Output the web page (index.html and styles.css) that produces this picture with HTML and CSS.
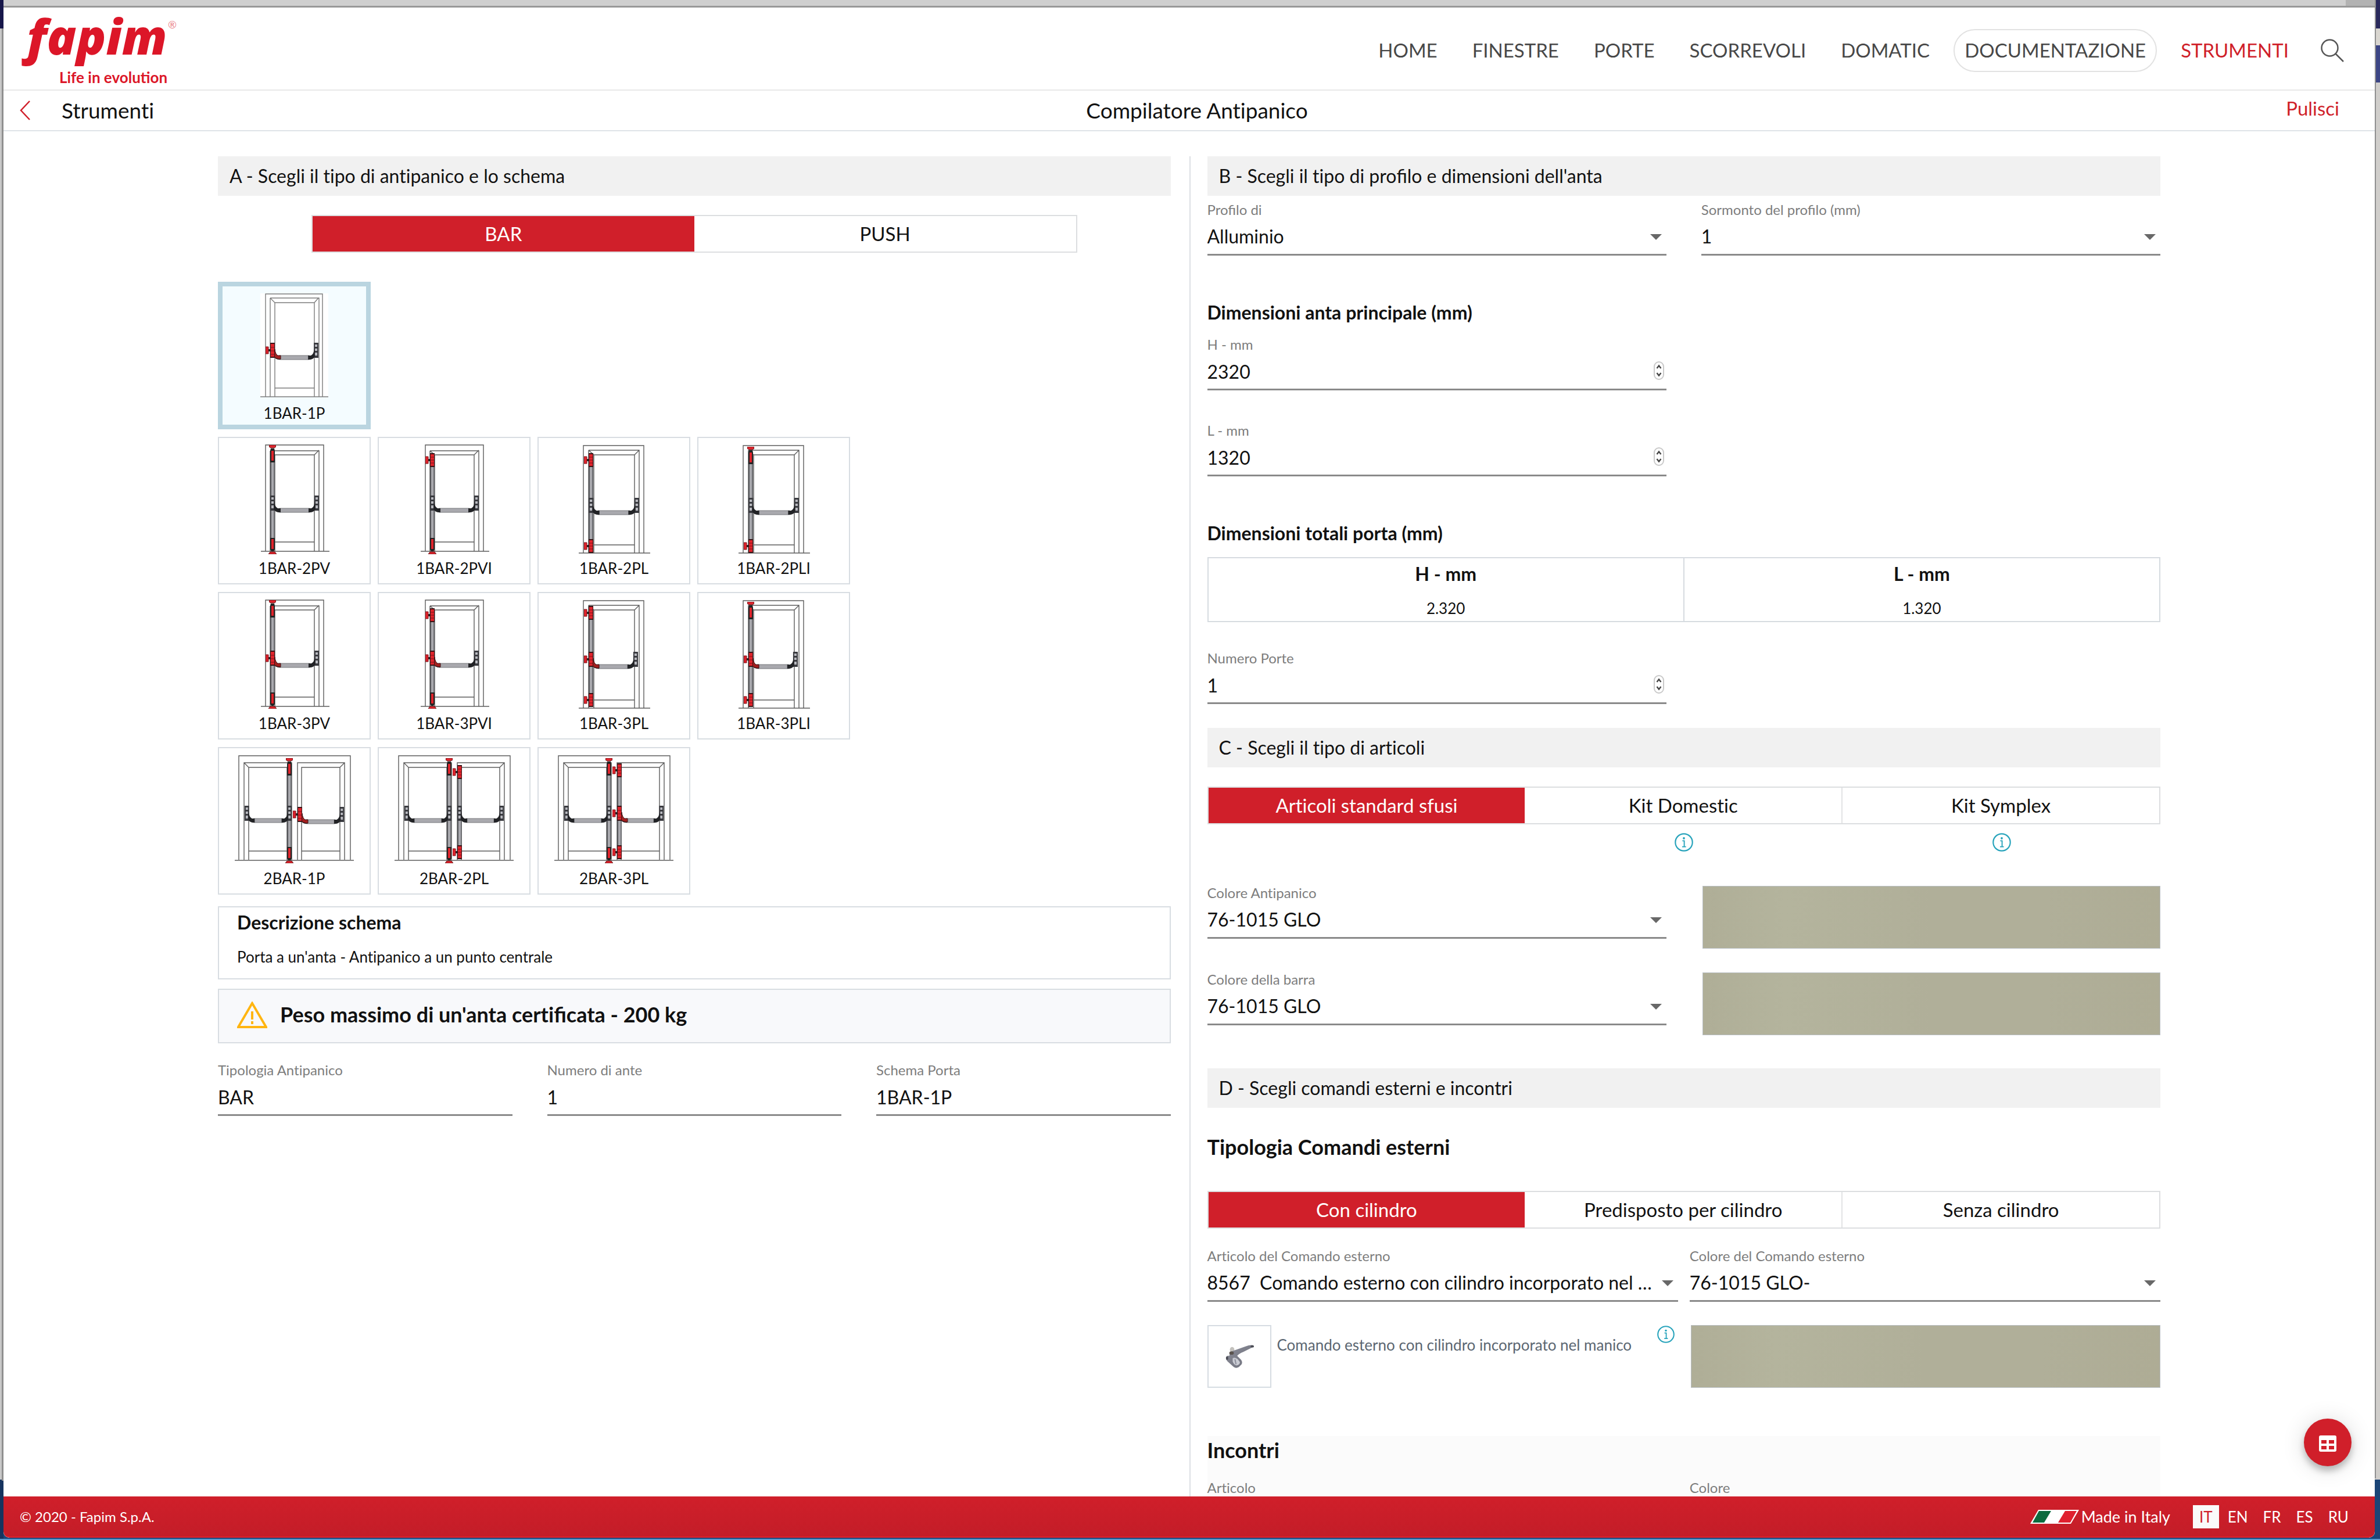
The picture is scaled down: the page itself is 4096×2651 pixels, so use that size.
FILE: index.html
```html
<!DOCTYPE html>
<html lang="it">
<head>
<meta charset="utf-8">
<title>Compilatore Antipanico - Fapim</title>
<link rel="stylesheet" href="styles.css">
</head>
<body>

<svg class="sprite" aria-hidden="true">
  <!-- single door frames -->
  <symbol id="door-v" viewBox="0 0 263 210">
    <g class="frame">
      <path d="M82 197V14H182V197M90 24H174V197M90 24V197M98 197V31H166V197M166 31L174 23M98 31L90 24M98 181H166M74 197H192"/>
    </g>
  </symbol>
  <symbol id="door-l" viewBox="0 0 263 210">
    <g class="frame">
      <path d="M79 200V15H183V200M88 23H175V200M88 23V200M97 200V31H167V200M167 31L175 23M97 31L88 23M97 186H167M71 200H194"/>
    </g>
  </symbol>
  <!-- double door frame -->
  <symbol id="door-2" viewBox="0 0 263 210">
    <g class="frame">
      <path d="M36 194V15H228V194M45 194V27H127V194M53 194V35H119V194M45 27L53 35M53 179H119M137 194V27H218V194M144 194V35H210V194M218 27L210 35M144 179H210M29 195H234"/>
    </g>
  </symbol>
  <symbol id="shaft" viewBox="0 0 8 10" preserveAspectRatio="none">
    <rect width="8" height="10" fill="#a9a9ae"/><rect width="2" height="10" fill="#55565a"/><rect x="6" width="2" height="10" fill="#6c6d71"/>
  </symbol>
  <!-- horizontal push bar with its two end brackets -->
  <symbol id="bar" viewBox="0 0 84 30" preserveAspectRatio="none">
    <path d="M16 22H68V29H16Z" fill="#a9a9ae" stroke="#77787c" stroke-width="1"/>
    <path d="M0 0H8V26H0ZM76 0H84V26H76Z" fill="#3a3b40"/>
    <path d="M2 3H6V7H2ZM2 10H6V14H2ZM2 17H6V22H2ZM78 3H82V7H78ZM78 10H82V14H78ZM78 17H82V22H78Z" fill="#b9bac0"/>
    <path d="M7 9Q8 20 13 22H18V29H14Q8 28 6 23ZM77 9Q76 20 71 22H66V29H70Q76 28 78 23Z" fill="#222326"/>
  </symbol>
  <symbol id="lock" viewBox="0 0 16 28">
    <path d="M5 11H9V15H5Z" fill="#222"/>
    <path d="M0 7H5V19H0Z" fill="#d8202a" stroke="#7c1218" stroke-width="1"/>
    <path d="M8 0H16V26H8Z" fill="#3a1416"/><path d="M9 2H15V24H9Z" fill="#e0242c"/>
    <path d="M9 8H15M9 14H15M9 20H15" stroke="#7c1218" stroke-width="1"/>
  </symbol>
  <symbol id="elbow" viewBox="0 0 18 20"><path d="M6 2Q7 11 11 13H16V19H12Q6 18 3 13Z" fill="#a3201f" stroke="#3a1416" stroke-width="1"/></symbol>
  <symbol id="latch" viewBox="0 0 16 24">
    <path d="M5 10H9V14H5Z" fill="#222"/>
    <path d="M0 6H5V18H0Z" fill="#e0242c" stroke="#7c1218" stroke-width="1"/>
    <path d="M8 0H16V24H8Z" fill="#3a1416"/><path d="M9 2H15V22H9Z" fill="#e0242c"/>
    <path d="M9 7H15M9 12H15M9 17H15" stroke="#7c1218" stroke-width="1"/>
  </symbol>
  <symbol id="rod-top" viewBox="0 0 12 30">
    <path d="M0 0H12V3L9 5H3L0 3Z" fill="#e0242c" stroke="#5c1014" stroke-width="1"/>
    <path d="M3 6H9L10 10V30H2V10Z" fill="#222"/><path d="M4 10H8V27H4Z" fill="#e0242c"/>
  </symbol>
  <symbol id="rod-foot" viewBox="0 0 14 28">
    <path d="M3 0H11V20L9 23H5L3 20Z" fill="#222"/><path d="M5 2H9V19H5Z" fill="#e0242c"/>
    <path d="M3 24H11L14 28H0Z" fill="#e0242c" stroke="#5c1014" stroke-width="1"/>
  </symbol>
  <symbol id="info" viewBox="0 0 32 32">
    <circle cx="16" cy="16" r="14.7" fill="none" stroke="#27a3bb" stroke-width="2.2"/>
    <circle cx="16" cy="9" r="1.9" fill="#27a3bb"/>
    <path d="M13.4 13.4H16.6V23.4M13 23.6H19.6" fill="none" stroke="#27a3bb" stroke-width="1.9"/>
  </symbol>
  <symbol id="arrow" viewBox="0 0 20 10"><path d="M0 0H20L10 10Z" fill="#686868"/></symbol>
  <symbol id="spin" viewBox="0 0 18 32">
    <rect x="1" y="1" width="16" height="30" rx="8" fill="#fff" stroke="#c9c9c9" stroke-width="2"/>
    <path d="M5.5 12L9 7.500L12.500 12M5.500 20L9 24.500L12.500 20" fill="none" stroke="#444" stroke-width="2.400"/>
  </symbol>
</svg>

<div class="window">
  <div class="chrome"><span class="chrome-end"></span></div>

  <header class="header">
    <a class="logo" href="#" aria-label="Fapim - Life in evolution">
      <svg viewBox="0 0 270 126" width="270" height="126">
        <text class="logo-name" x="9" y="74">fapim</text>
        <text class="logo-mark" x="252" y="29">®</text>
        <text class="logo-claim" x="65" y="123">Life in evolution</text>
      </svg>
    </a>
    <nav class="nav">
      <a href="#">HOME</a>
      <a href="#">FINESTRE</a>
      <a href="#">PORTE</a>
      <a href="#">SCORREVOLI</a>
      <a href="#">DOMATIC</a>
      <a class="pill" href="#">DOCUMENTAZIONE</a>
      <a class="current" href="#">STRUMENTI</a>
      <button class="icon-button search" aria-label="Cerca">
        <svg width="40" height="40" viewBox="0 0 40 40" fill="none" stroke="#555" stroke-width="2.500"><circle cx="15.500" cy="15.500" r="14"/><path d="M25.500 25.500L39 39"/></svg>
      </button>
    </nav>
  </header>

  <div class="subbar">
    <a class="back" href="#">
      <svg width="18" height="34" viewBox="0 0 18 34" fill="none" stroke="#d01f2a" stroke-width="2.500"><path d="M17 1L2 17L17 33"/></svg>
      Strumenti
    </a>
    <h1>Compilatore Antipanico</h1>
    <button class="clear">Pulisci</button>
  </div>

  <main class="main">
    <section class="col col-a">
      <h2 class="section">A - Scegli il tipo di antipanico e lo schema</h2>
      <div class="tabs tabs-bar">
        <button class="active">BAR</button>
        <button>PUSH</button>
      </div>

      <div class="cards">
        <button class="card selected">
          <svg viewBox="0 0 263 210">
            <rect x="73" y="20" width="117" height="178" fill="#fff"/>
            <g class="frame light"><path d="M82 198V21H180V198M90 28H174V198M90 28V198M98 198V36H166V198M166 36L173 28M98 36L90 28M98 183H166M73 198H190"/></g>
            <use href="#bar" x="90" y="105" width="83" height="30"/><use href="#elbow" x="92" y="114" width="18" height="20"/><use href="#lock" x="82" y="105" width="16" height="28"/>
          </svg>1BAR-1P
        </button>
        <button class="card row-start">
          <svg viewBox="0 0 263 210"><use href="#door-v" width="263" height="210"/><use href="#shaft" x="90" y="40" width="8" height="140"/><use href="#bar" x="90" y="101" width="84" height="30"/><use href="#rod-top" x="88" y="14" width="12" height="30"/><use href="#rod-foot" x="87" y="174" width="14" height="28"/></svg>1BAR-2PV
        </button>
        <button class="card">
          <svg viewBox="0 0 263 210"><use href="#door-v" width="263" height="210"/><use href="#shaft" x="90" y="40" width="8" height="140"/><use href="#bar" x="90" y="101" width="84" height="30"/><use href="#latch" x="82" y="28" width="16" height="24"/><use href="#rod-foot" x="87" y="174" width="14" height="28"/></svg>1BAR-2PVI
        </button>
        <button class="card">
          <svg viewBox="0 0 263 210"><use href="#door-l" width="263" height="210"/><use href="#shaft" x="88" y="40" width="8" height="140"/><use href="#bar" x="88" y="105" width="87" height="30"/><use href="#latch" x="80" y="28" width="16" height="24"/><use href="#latch" x="80" y="176" width="16" height="24"/></svg>1BAR-2PL
        </button>
        <button class="card">
          <svg viewBox="0 0 263 210"><use href="#door-l" width="263" height="210"/><use href="#shaft" x="88" y="40" width="8" height="140"/><use href="#bar" x="88" y="105" width="87" height="30"/><use href="#rod-top" x="86" y="17" width="12" height="30"/><use href="#latch" x="80" y="176" width="16" height="24"/></svg>1BAR-2PLI
        </button>
        <button class="card row-start">
          <svg viewBox="0 0 263 210"><use href="#door-v" width="263" height="210"/><use href="#shaft" x="90" y="40" width="8" height="140"/><use href="#bar" x="90" y="101" width="84" height="30"/><use href="#elbow" x="92" y="110" width="18" height="20"/><use href="#lock" x="82" y="101" width="16" height="28"/><use href="#rod-top" x="88" y="14" width="12" height="30"/><use href="#rod-foot" x="87" y="173" width="14" height="28"/></svg>1BAR-3PV
        </button>
        <button class="card">
          <svg viewBox="0 0 263 210"><use href="#door-v" width="263" height="210"/><use href="#shaft" x="90" y="40" width="8" height="140"/><use href="#bar" x="90" y="101" width="84" height="30"/><use href="#elbow" x="92" y="110" width="18" height="20"/><use href="#lock" x="82" y="101" width="16" height="28"/><use href="#latch" x="82" y="28" width="16" height="24"/><use href="#rod-foot" x="87" y="173" width="14" height="28"/></svg>1BAR-3PVI
        </button>
        <button class="card">
          <svg viewBox="0 0 263 210"><use href="#door-l" width="263" height="210"/><use href="#shaft" x="88" y="40" width="8" height="140"/><use href="#bar" x="88" y="103" width="85" height="30"/><use href="#elbow" x="90" y="112" width="18" height="20"/><use href="#lock" x="80" y="103" width="16" height="28"/><use href="#latch" x="80" y="24" width="16" height="24"/><use href="#latch" x="80" y="174" width="16" height="24"/></svg>1BAR-3PL
        </button>
        <button class="card">
          <svg viewBox="0 0 263 210"><use href="#door-l" width="263" height="210"/><use href="#shaft" x="88" y="40" width="8" height="140"/><use href="#bar" x="88" y="103" width="85" height="30"/><use href="#elbow" x="90" y="112" width="18" height="20"/><use href="#lock" x="80" y="103" width="16" height="28"/><use href="#rod-top" x="86" y="17" width="12" height="30"/><use href="#latch" x="80" y="174" width="16" height="24"/></svg>1BAR-3PLI
        </button>
        <button class="card row-start">
          <svg viewBox="0 0 263 210"><use href="#door-2" width="263" height="210"/><use href="#shaft" x="119" y="40" width="8" height="140"/><use href="#bar" x="46" y="101" width="81" height="30"/><use href="#bar" x="137" y="103" width="80" height="30"/><use href="#elbow" x="139" y="112" width="18" height="20"/><use href="#lock" x="129" y="103" width="16" height="28"/><use href="#rod-top" x="117" y="19" width="12" height="30"/><use href="#rod-foot" x="116" y="172" width="14" height="28"/></svg>2BAR-1P
        </button>
        <button class="card">
          <svg viewBox="0 0 263 210"><use href="#door-2" width="263" height="210"/><use href="#shaft" x="119" y="40" width="8" height="140"/><use href="#shaft" x="137" y="45" width="8" height="140"/><use href="#bar" x="46" y="101" width="81" height="30"/><use href="#bar" x="137" y="101" width="80" height="30"/><use href="#rod-top" x="117" y="19" width="12" height="30"/><use href="#rod-foot" x="116" y="172" width="14" height="28"/><use href="#latch" x="129" y="31" width="16" height="24"/><use href="#latch" x="129" y="169" width="16" height="24"/></svg>2BAR-2PL
        </button>
        <button class="card">
          <svg viewBox="0 0 263 210"><use href="#door-2" width="263" height="210"/><use href="#shaft" x="119" y="40" width="8" height="140"/><use href="#shaft" x="137" y="45" width="8" height="140"/><use href="#bar" x="46" y="101" width="81" height="30"/><use href="#bar" x="137" y="101" width="80" height="30"/><use href="#elbow" x="139" y="110" width="18" height="20"/><use href="#lock" x="129" y="101" width="16" height="28"/><use href="#rod-top" x="117" y="19" width="12" height="30"/><use href="#rod-foot" x="116" y="172" width="14" height="28"/><use href="#latch" x="129" y="28" width="16" height="24"/><use href="#latch" x="129" y="169" width="16" height="24"/></svg>2BAR-3PL
        </button>
      </div>

      <div class="box description">
        <h3>Descrizione schema</h3>
        <p>Porta a un'anta - Antipanico a un punto centrale</p>
      </div>

      <div class="box warning">
        <svg width="52" height="46" viewBox="0 0 52 46"><path d="M26 3L50 44H2Z" fill="none" stroke="#ffb511" stroke-width="4"/><path d="M26 17V31M26 34V39" stroke="#ffb511" stroke-width="4"/></svg>
        <strong>Peso massimo di un'anta certi<span class="lig">fi</span>cata - 200 kg</strong>
      </div>

      <div class="fields three">
        <div class="field"><label for="tipologia">Tipologia Antipanico</label><input id="tipologia" type="text" value="BAR" readonly></div>
        <div class="field"><label for="ante">Numero di ante</label><input id="ante" type="text" value="1" readonly></div>
        <div class="field"><label for="schema">Schema Porta</label><input id="schema" type="text" value="1BAR-1P" readonly></div>
      </div>
    </section>

    <section class="col col-b">
      <h2 class="section">B - Scegli il tipo di pro<span class="lig">fi</span>lo e dimensioni dell'anta</h2>
      <div class="fields two profile">
        <div class="field"><label class="lig" for="profilo">Profilo di</label><select id="profilo"><option>Alluminio</option></select><svg class="mark"><use href="#arrow"/></svg></div>
        <div class="field"><label class="lig" for="sormonto">Sormonto del profilo (mm)</label><select id="sormonto"><option>1</option></select><svg class="mark"><use href="#arrow"/></svg></div>
      </div>

      <h3 class="subhead">Dimensioni anta principale (mm)</h3>
      <div class="fields two sizes">
        <div class="field"><label for="h">H - mm</label><input id="h" type="number" value="2320"><svg class="mark spin"><use href="#spin"/></svg></div>
        <div class="field new-row"><label for="l">L - mm</label><input id="l" type="number" value="1320"><svg class="mark spin"><use href="#spin"/></svg></div>
      </div>

      <h3 class="subhead">Dimensioni totali porta (mm)</h3>
      <table class="totals">
        <thead><tr><th scope="col">H - mm</th><th scope="col">L - mm</th></tr></thead>
        <tbody><tr><td>2.320</td><td>1.320</td></tr></tbody>
      </table>

      <div class="fields two doors">
        <div class="field"><label for="porte">Numero Porte</label><input id="porte" type="number" value="1"><svg class="mark spin"><use href="#spin"/></svg></div>
      </div>

      <h2 class="section">C - Scegli il tipo di articoli</h2>
      <div class="tabs">
        <button class="active">Articoli standard sfusi</button>
        <button>Kit Domestic</button>
        <button>Kit Symplex</button>
      </div>
      <div class="infos">
        <button class="icon-button domestic" aria-label="Info Kit Domestic"><svg width="32" height="32"><use href="#info"/></svg></button>
        <button class="icon-button" aria-label="Info Kit Symplex"><svg width="32" height="32"><use href="#info"/></svg></button>
      </div>

      <div class="fields two colours">
        <div class="field"><label for="c-anti">Colore Antipanico</label><select id="c-anti"><option>76-1015 GLO</option></select><svg class="mark"><use href="#arrow"/></svg></div>
        <div class="swatch"></div>
        <div class="field"><label for="c-barra">Colore della barra</label><select id="c-barra"><option>76-1015 GLO</option></select><svg class="mark"><use href="#arrow"/></svg></div>
        <div class="swatch"></div>
      </div>

      <h2 class="section">D - Scegli comandi esterni e incontri</h2>
      <h3 class="title">Tipologia Comandi esterni</h3>
      <div class="tabs">
        <button class="active">Con cilindro</button>
        <button>Predisposto per cilindro</button>
        <button>Senza cilindro</button>
      </div>
      <div class="fields pair">
        <div class="field"><label for="comando">Articolo del Comando esterno</label><select id="comando"><option>8567&nbsp; Comando esterno con cilindro incorporato nel manico</option></select><svg class="mark"><use href="#arrow"/></svg></div>
        <div class="field"><label for="c-comando">Colore del Comando esterno</label><select id="c-comando"><option>76-1015 GLO-</option></select><svg class="mark"><use href="#arrow"/></svg></div>
        <div class="article">
          <svg class="thumb" viewBox="0 0 110 108">
            <defs><linearGradient id="metal" x1="0" y1="0" x2="1" y2="1"><stop offset="0" stop-color="#8b8d99"/><stop offset="1" stop-color="#6d6f7a"/></linearGradient></defs>
            <ellipse cx="42" cy="42" rx="4" ry="5" fill="#c3c1bd"/>
            <path d="M32 54Q30 59 34 63L45 73Q49 76 54 73L59 68Q61 64 58 60L51 53Q54 49 62 46L78 38Q82 36 79 34Q74 33 66 36L44 44Q38 46 37 53Q34 52 32 54Z" fill="url(#metal)"/>
            <path d="M43 57Q48 55 52 59L56 64Q56 69 50 70Q45 69 43 63Z" fill="#c9cbd3"/>
            <path d="M47 59L49 68" stroke="#8b8d99" stroke-width="2"/>
            <ellipse cx="41" cy="48" rx="4" ry="3" fill="#5a534e"/><ellipse cx="78" cy="36" rx="3" ry="2" fill="#4b4c55"/><ellipse cx="33" cy="57" rx="2" ry="3" fill="#4b4c55"/>
          </svg>
          <p>Comando esterno con cilindro incorporato nel manico</p>
          <button class="icon-button" aria-label="Info articolo"><svg width="30" height="30"><use href="#info"/></svg></button>
        </div>
        <div class="swatch"></div>
      </div>

      <div class="strikes">
        <h3 class="title">Incontri</h3>
        <div class="fields pair">
          <div class="field"><label for="articolo">Articolo</label><select id="articolo"><option></option></select></div>
          <div class="field"><label for="colore">Colore</label><select id="colore"><option></option></select></div>
        </div>
      </div>
    </section>

    <button class="fab" aria-label="Tabella">
      <svg width="30" height="28" viewBox="0 0 30 28"><path fill="#fff" fill-rule="evenodd" d="M3 0H27Q30 0 30 3V25Q30 28 27 28H3Q0 28 0 25V3Q0 0 3 0ZM4 8V14H13V8ZM17 8V14H26V8ZM4 18V24H13V18ZM17 18V24H26V18Z"/></svg>
    </button>
  </main>

  <footer class="footer">
    <small>© 2020 - Fapim S.p.A.</small>
    <div class="made">
      <svg width="84" height="24" viewBox="0 0 84 24"><path d="M14 0H84L70 24H0Z" fill="#fff"/><path d="M15 2H36L24 22H4Z" fill="#0c6b3e"/><path d="M60 2H80L69 22H48Z" fill="#e0202f"/></svg>
      Made in Italy
    </div>
    <nav class="langs">
      <a class="on" href="#">IT</a>
      <a href="#">EN</a>
      <a href="#">FR</a>
      <a href="#">ES</a>
      <a href="#">RU</a>
    </nav>
  </footer>
</div>
</body>
</html>
```
FILE: styles.css
```css
* { box-sizing: border-box; }

body {
  margin: 0;
  height: 100vh;
  padding: 0 9px 4px 6px;
  font-family: Lato, "Liberation Sans", sans-serif;
  font-variant-ligatures: no-common-ligatures;
  font-size: 33px;
  line-height: 40px;
  color: #111;
  background:
    linear-gradient(#5b9bd0, #5b9bd0) bottom / 100% 2px no-repeat,
    linear-gradient(#8f8f8f, #8f8f8f) 3px 49px / 3px 2500px no-repeat,
    linear-gradient(#17174a 0 49px, #c9c9c9 49px 2547px, #16345f 2547px) left / 6px 100% no-repeat,
    linear-gradient(#8f8f8f, #8f8f8f) right 7px top / 2px 96% no-repeat,
    linear-gradient(#2a2a5c 0 49px, #d9d6d0 49px 78px, #3c4585 78px 142px, #d0cecb 142px 2547px, #1c4577 2547px);
}

h1, h2, h3, p { margin: 0; font-weight: 400; }
a { color: inherit; text-decoration: none; }
button, input, select { font: inherit; color: inherit; border: 0; padding: 0; margin: 0; background: none; border-radius: 0; font-variant-ligatures: inherit; }
button { cursor: pointer; }
svg { display: block; }
.sprite { position: absolute; width: 0; height: 0; }
.lig { font-variant-ligatures: common-ligatures; }
.icon-button { display: block; line-height: 0; }

.window {
  height: 100%;
  display: flex;
  flex-direction: column;
  background: #fff;
  border-radius: 0 0 10px 10px;
  overflow: hidden;
}

.chrome { height: 13px; flex: none; display: flex; justify-content: flex-end; background: #cfcfcf; border-bottom: 3px solid #989898; }
.chrome-end { width: 50px; background: #b2b2b2; }

/* header */
.header {
  flex: none;
  display: flex;
  justify-content: space-between;
  align-items: center;
  height: 143px;
  padding: 6px 53px 0 31px;
  border-bottom: 2px solid #e8e8e8;
}
.logo-name { font: italic 800 84px "Open Sans", sans-serif; fill: #dc1628; }
.logo-mark { font: 18px Lato, sans-serif; fill: #ea7f88; }
.logo-claim { font: 700 26px Lato, sans-serif; fill: #dc1628; }
.logo svg { overflow: visible; }
.logo { margin-bottom: 8px; }
.nav { display: flex; align-items: center; gap: 22px; color: #484848; }
.nav a { padding: 14px 17px 16px; border: 2px solid transparent; border-radius: 37px; }
.nav .pill { border-color: #e2e2e2; }
.nav .current { color: #d01f2a; }
.search { margin-left: 14px; }

.subbar {
  flex: none;
  display: grid;
  grid-template-columns: 1fr auto 1fr;
  align-items: center;
  height: 70px;
  padding: 0 61px 0 28px;
  border-bottom: 2px solid #dfe3e7;
  font-size: 37px;
}
.back { display: flex; align-items: center; gap: 54px; }
.subbar h1 { font-size: 37px; padding-left: 60px; }
.clear { justify-self: end; font-size: 33px; color: #d01f2a; padding-bottom: 8px; }

/* two working columns */
.main {
  flex: 1;
  min-height: 0;
  overflow: hidden;
  position: relative;
  display: grid;
  grid-template-columns: 1fr 1fr;
  padding: 43px 369px 0 369px;
}
.col-a { padding-right: 32px; }
.col-b { padding-left: 29px; border-left: 2px solid #dcdfe4; }

.section { height: 68px; padding: 0 20px; background: #f1f1f1; font-size: 32px; line-height: 67px; }

.tabs { display: flex; height: 65px; margin-top: 33px; border: 2px solid #dcdee0; }
.tabs button { flex: 1; border-left: 2px solid #e2e3e5; padding-bottom: 2px; }
.tabs .active, .tabs .active + button { border-left: 0; }
.tabs .active { background: #d01f2a; color: #fff; }
.tabs-bar { margin: 33px 161px 0; }

.cards {
  display: grid;
  grid-template-columns: repeat(4, 263px);
  grid-auto-rows: 254px;
  gap: 13px 12px;
  margin-top: 50px;
}
.row-start { grid-column-start: 1; }
.card {
  display: block;
  box-shadow: inset 0 0 0 2px #d8dde2;
  font-size: 26px;
  line-height: 32px;
  padding-bottom: 12px;
}
.card svg { width: 100%; }
.selected { background: #f4fcff; box-shadow: inset 0 0 0 8px #bad5e0; }
.frame { fill: none; stroke: #5c5c5c; stroke-width: 1.4; }
.frame.light { stroke: #7c7c7c; }

.box { border: 2px solid #d8dde2; }
.description { margin-top: 20px; padding: 6px 31px 16px; height: 126px; }
.description h3 { font-weight: 700; font-size: 32px; }
.description p { margin-top: 21px; font-size: 26px; line-height: 36px; }
.warning { display: flex; align-items: center; gap: 22px; margin-top: 16px; height: 94px; padding: 0 31px 4px; background: #f8f9fb; font-size: 36px; }
.warning strong { padding-bottom: 3px; }

/* fields */
.fields { display: grid; }
.three { grid-template-columns: repeat(3, 1fr); gap: 60px; margin-top: 30px; }
.two { grid-template-columns: 1fr 1fr; column-gap: 60px; }
.pair { grid-template-columns: 1fr 1fr; column-gap: 20px; }
.field { display: grid; grid-template-columns: minmax(0, 1fr); grid-template-rows: 34px 61px; }
.field label { font-size: 24px; line-height: 32px; color: #7d7d7d; }
.field input, .field select {
  grid-area: 2 / 1;
  width: 100%;
  height: 61px;
  padding-bottom: 2px;
  border-bottom: 3px solid #8a8a8a;
  font-size: 32px;
  appearance: none;
  outline: 0;
}
.field select { padding-right: 40px; overflow: hidden; text-overflow: ellipsis; white-space: nowrap; }
.field input[type="number"] { appearance: textfield; }
.mark { grid-area: 2 / 1; justify-self: end; align-self: center; width: 20px; height: 10px; margin: 0 8px 4px 0; pointer-events: none; }
.spin { width: 18px; height: 32px; margin: 0 4px 8px 0; }
.new-row { grid-column-start: 1; }

.profile { margin-top: 8px; }
.subhead { margin-top: 78px; font-weight: 700; font-size: 32px; }
.sizes { margin-top: 19px; row-gap: 53px; }

.totals { width: 100%; margin-top: 21px; border-collapse: collapse; table-layout: fixed; text-align: center; }
.totals th, .totals td { padding: 0; border: 2px solid #d6dbe0; }
.totals th { height: 58px; border-bottom: 0; font-size: 32px; padding-bottom: 3px; }
.totals td { height: 52px; border-top: 0; padding-top: 7px; font-size: 26px; }

.doors { margin: 46px 0 41px; }

.infos { display: grid; grid-template-columns: repeat(3, 1fr); justify-items: center; margin-top: 15px; }
.domestic { grid-column-start: 2; }

.colours { row-gap: 37px; margin: 55px 0 57px; }
.swatch {
  height: 108px;
  margin: 4px 0 0 2px;
  border: 1px solid #b9bfc4;
  background: linear-gradient(90deg, #afae97, #b4b49d 18%, #b0af99 50%, #b0af99 75%, #aeac95);
}

.title { font-weight: 700; font-size: 36px; line-height: 44px; }
.section + .title { margin-top: 45px; }
.title + .tabs { margin-top: 54px; }
.tabs + .pair { margin-top: 31px; row-gap: 40px; }
.pair .swatch { margin: 0 0 0 2px; }

.article { display: flex; align-items: flex-start; gap: 10px; }
.thumb { width: 110px; height: 108px; border: 2px solid #d6dce2; flex: none; }
.article p { flex: 1; margin-top: 14px; font-size: 26px; color: #5b6671; }
.article button { margin: 1px 6px 0 0; }

.strikes { margin-top: 83px; padding-top: 2px; background: #fbfbfb; }
.strikes .fields { margin-top: 27px; }

.fab {
  position: absolute;
  right: 40px;
  bottom: 52px;
  width: 82px;
  height: 82px;
  border-radius: 50%;
  background: #d01f2a;
  display: grid;
  place-items: center;
  padding-top: 4px;
  box-shadow: 0 8px 12px rgba(0, 0, 0, .24), 0 3px 40px rgba(0, 0, 0, .14);
}

.footer {
  flex: none;
  display: flex;
  align-items: center;
  height: 71px;
  padding: 0 34px 0 28px;
  background: linear-gradient(#d01f2a, #c31d28);
  border-bottom: 2px solid #e3222c;
  border-radius: 0 0 10px 10px;
  color: #fff;
  font-size: 26px;
}
.footer small { font-size: 24px; margin-right: auto; }
.made { display: flex; align-items: center; gap: 4px; margin-right: 39px; font-size: 27px; }
.langs { display: flex; gap: 4px; }
.langs a { padding: 0 11px; }
.langs .on { background: #fafafa; color: #d01f2a; }
```
